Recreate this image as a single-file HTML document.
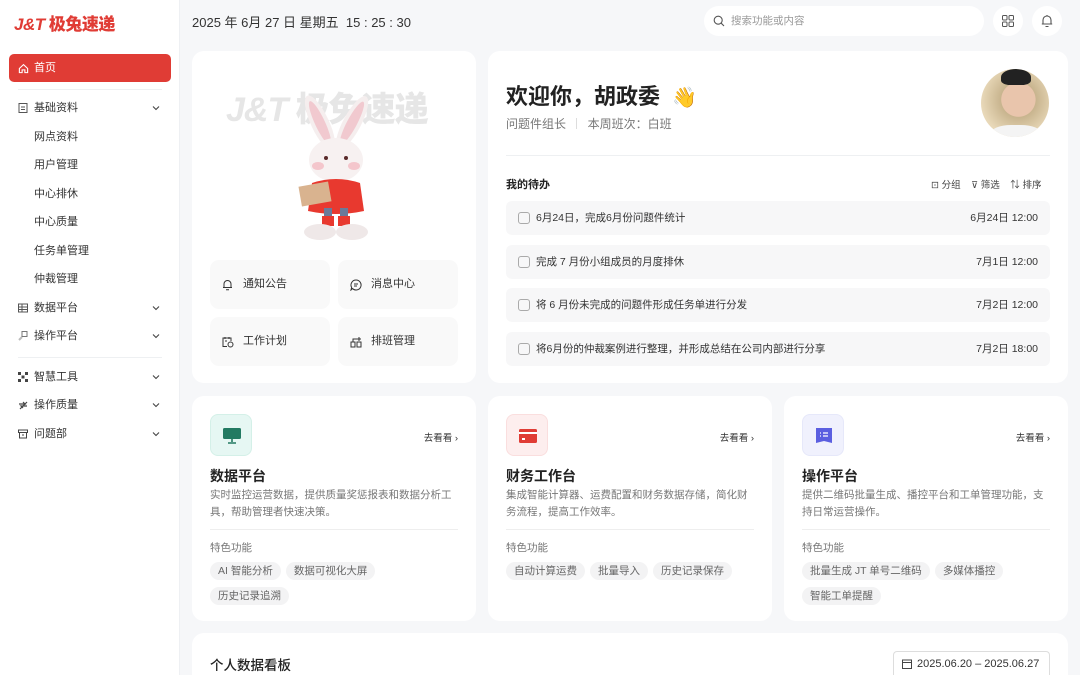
<!DOCTYPE html>
<html style="width:1080px;height:675px;overflow:hidden"><head><meta charset="utf-8">
<style>
*{margin:0;padding:0;box-sizing:border-box}
body{width:1080px;height:675px;overflow:hidden;background:#f6f7f9;font-family:"Liberation Sans","Noto Sans CJK SC",sans-serif;color:#222;position:relative}
.abs{position:absolute}
.side{left:0;top:0;width:180px;height:675px;background:#fff;border-right:1px solid #eef0f3}
.logo{left:14px;top:10px;font-size:17px;font-weight:900;font-style:italic;color:#e03c35;letter-spacing:-0.5px}
.active{left:9px;top:54px;width:162px;height:28px;background:#e03c35;border-radius:5px;color:#fff;font-size:11px;padding-left:25px;line-height:28px}
.it{left:34px;font-size:11px;color:#333;line-height:14px}
.ic{left:18px;width:10px;height:10px}
.chev{left:152px;width:8px;height:8px}
.hr{height:1px;background:#eef0f2}
.card{background:#fff;border-radius:12px}
.qb{background:#f9f9f9;border-radius:9px;width:120px;height:49px;font-size:11px;color:#333;line-height:49px;padding-left:33px}
.todo{left:506px;width:544px;height:34px;background:#f7f7f8;border-radius:6px;font-size:10.5px;color:#333;line-height:34px;padding-left:30px}
.todo i{position:absolute;left:12px;top:11px;width:12px;height:12px;border:1px solid #aaa;border-radius:3px}
.todo b{position:absolute;right:12px;font-weight:normal}
.pc h3{position:absolute;left:18px;top:70px;font-size:14px;font-weight:bold;color:#222}
.pc p{position:absolute;left:18px;top:91px;width:250px;font-size:10.5px;line-height:17px;color:#777}
.pc .ln{position:absolute;left:18px;right:18px;top:133px;height:1px;background:#eee}
.pc .ft{position:absolute;left:18px;top:144px;font-size:10.5px;color:#777}
.pc .tags{position:absolute;left:18px;top:165px;width:250px}
.tag{display:inline-block;background:#f3f3f4;border-radius:9px;font-size:10.5px;color:#666;padding:0 8px;height:18px;line-height:18px;margin:0 5px 6px 0}
.go{position:absolute;right:18px;top:34px;font-size:9.5px;color:#333}
.ib{position:absolute;left:18px;top:18px;width:42px;height:42px;border-radius:8px}
</style></head><body>
<div class="abs side"></div>
<div class="abs logo">J&amp;T <span style="font-style:normal">极兔速递</span></div>
<div class="abs active"><svg class="abs" style="left:9px;top:9px" width="11" height="11" viewBox="0 0 12 12" fill="none" stroke="#fff" stroke-width="1.2"><path d="M1.5 6L6 1.8 10.5 6V10.5H7.5V7.5h-3v3h-3z"/></svg>首页</div>
<div class="abs hr" style="left:18px;top:89px;width:144px"></div>
<div class="abs hr" style="left:18px;top:357px;width:144px"></div>
<svg class="abs ic" style="top:103px" viewBox="0 0 10 10" fill="none" stroke="#555"><rect x="1" y="0.5" width="8" height="9"/><path d="M3 4h4M3 6.5h4"/></svg>
<div class="abs it" style="top:101px">基础资料</div>
<div class="abs it" style="top:130px">网点资料</div>
<div class="abs it" style="top:158px">用户管理</div>
<div class="abs it" style="top:187px">中心排休</div>
<div class="abs it" style="top:215px">中心质量</div>
<div class="abs it" style="top:244px">任务单管理</div>
<div class="abs it" style="top:272px">仲裁管理</div>
<svg class="abs ic" style="top:303px" viewBox="0 0 10 10" fill="none" stroke="#555"><rect x="0.5" y="1" width="9" height="8"/><path d="M0.5 4h9M0.5 6.5h9M4 1v8"/></svg>
<div class="abs it" style="top:301px">数据平台</div>
<svg class="abs ic" style="top:331px" viewBox="0 0 10 10" fill="none" stroke="#777"><rect x="4" y="0.5" width="5" height="5"/><path d="M1 9L4 6" stroke="#bbb" stroke-width="2"/></svg>
<div class="abs it" style="top:329px">操作平台</div>
<svg class="abs ic" style="top:372px" viewBox="0 0 10 10" fill="#444"><rect x="0" y="0" width="3" height="3"/><rect x="7" y="0" width="3" height="3"/><rect x="0" y="7" width="3" height="3"/><rect x="7" y="7" width="3" height="3"/><rect x="3.5" y="3.5" width="3" height="3"/></svg>
<div class="abs it" style="top:370px">智慧工具</div>
<svg class="abs ic" style="top:400px" viewBox="0 0 10 10" fill="none" stroke="#444" stroke-width="1.2"><path d="M1 4h6l-2-2M9 6H3l2 2M2 9l7-7"/></svg>
<div class="abs it" style="top:398px">操作质量</div>
<svg class="abs ic" style="top:429px" viewBox="0 0 10 10" fill="none" stroke="#444"><rect x="0.5" y="1" width="9" height="2.5"/><path d="M1.5 3.5V9h7V3.5M4 6h2"/></svg>
<div class="abs it" style="top:427px">问题部</div>
<svg class="abs chev" style="top:104px" viewBox="0 0 8 8" fill="none" stroke="#444" stroke-width="1.1"><path d="M1 2.5l3 3 3-3"/></svg>
<svg class="abs chev" style="top:304px" viewBox="0 0 8 8" fill="none" stroke="#444" stroke-width="1.1"><path d="M1 2.5l3 3 3-3"/></svg>
<svg class="abs chev" style="top:332px" viewBox="0 0 8 8" fill="none" stroke="#444" stroke-width="1.1"><path d="M1 2.5l3 3 3-3"/></svg>
<svg class="abs chev" style="top:373px" viewBox="0 0 8 8" fill="none" stroke="#444" stroke-width="1.1"><path d="M1 2.5l3 3 3-3"/></svg>
<svg class="abs chev" style="top:401px" viewBox="0 0 8 8" fill="none" stroke="#444" stroke-width="1.1"><path d="M1 2.5l3 3 3-3"/></svg>
<svg class="abs chev" style="top:430px" viewBox="0 0 8 8" fill="none" stroke="#444" stroke-width="1.1"><path d="M1 2.5l3 3 3-3"/></svg>

<div class="abs" style="left:192px;top:12px;font-size:13px;color:#333">2025 年 6月 27 日 星期五 &nbsp;15 : 25 : 30</div>
<div class="abs" style="left:704px;top:6px;width:280px;height:30px;background:#fff;border-radius:15px;font-size:10.5px;color:#999;line-height:30px;padding-left:27px">
<svg class="abs" style="left:9px;top:9px" width="12" height="12" viewBox="0 0 12 12" fill="none" stroke="#555" stroke-width="1.1"><circle cx="5.2" cy="5.2" r="4"/><path d="M8.2 8.2L11 11"/></svg>搜索功能或内容</div>
<div class="abs" style="left:993px;top:6px;width:30px;height:30px;background:#fff;border-radius:15px"><svg class="abs" style="left:9px;top:9px" width="12" height="12" viewBox="0 0 12 12" fill="none" stroke="#555"><rect x="0.5" y="0.5" width="4.5" height="4.5" rx="1"/><rect x="7" y="0.5" width="4.5" height="4.5" rx="1"/><rect x="0.5" y="7" width="4.5" height="4.5" rx="1"/><rect x="7" y="7" width="4.5" height="4.5" rx="1"/></svg></div>
<div class="abs" style="left:1032px;top:6px;width:30px;height:30px;background:#fff;border-radius:15px"><svg class="abs" style="left:9px;top:8px" width="12" height="14" viewBox="0 0 12 14" fill="none" stroke="#555" stroke-width="1.1"><path d="M2 10V6a4 4 0 0 1 8 0v4h1.2H0.8H2M4.5 12.5h3M6 1v1"/></svg></div>

<div class="abs card" style="left:192px;top:51px;width:284px;height:332px"></div>
<div class="abs" style="left:226px;top:82px;font-size:34px;font-weight:900;font-style:italic;color:#e6e6e6;letter-spacing:-1px">J&amp;T <span style="font-style:normal">极兔速递</span></div>
<svg class="abs" style="left:290px;top:88px" width="90" height="152" viewBox="0 0 90 152">
<ellipse cx="30" cy="35" rx="9" ry="30" fill="#f5eeee" transform="rotate(-25 30 35)"/><ellipse cx="30" cy="35" rx="5" ry="24" fill="#f1c9cf" transform="rotate(-25 30 35)"/>
<ellipse cx="62" cy="35" rx="9" ry="30" fill="#f5eeee" transform="rotate(28 62 35)"/><ellipse cx="62" cy="35" rx="5" ry="24" fill="#f1c9cf" transform="rotate(28 62 35)"/>
<ellipse cx="46" cy="72" rx="27" ry="22" fill="#f7f1f1"/>
<ellipse cx="28" cy="78" rx="6" ry="4" fill="#f4c6cc"/><ellipse cx="64" cy="78" rx="6" ry="4" fill="#f4c6cc"/>
<circle cx="36" cy="70" r="2" fill="#5a2a2a"/><circle cx="56" cy="70" r="2" fill="#5a2a2a"/>
<path d="M22 95q24-8 48 0l4 28q-28 6-56 0z" fill="#e8392f"/>
<rect x="10" y="96" width="30" height="20" fill="#d9b38f" transform="rotate(-10 25 106)"/>
<rect x="34" y="120" width="8" height="10" fill="#6b7a99"/><rect x="50" y="120" width="8" height="10" fill="#6b7a99"/>
<path d="M32 128h12v10h-12zM48 128h12v10h-12z" fill="#e8392f"/>
<ellipse cx="30" cy="144" rx="16" ry="8" fill="#efe8e8"/><ellipse cx="62" cy="144" rx="16" ry="8" fill="#efe8e8"/>
</svg>
<div class="abs qb" style="left:210px;top:260px"><svg class="abs" style="left:12px;top:19px" width="11" height="12" viewBox="0 0 11 12" fill="none" stroke="#333"><path d="M2 8.5V5a3.5 3.5 0 0 1 7 0v3.5h1H1zM4 10.8h3"/></svg>通知公告</div>
<div class="abs qb" style="left:338px;top:260px"><svg class="abs" style="left:12px;top:19px" width="12" height="12" viewBox="0 0 12 12" fill="none" stroke="#333"><path d="M6 1a5 5 0 1 1-3.5 8.5L1 11l.6-2.6A5 5 0 0 1 6 1zM4 5h4M4 7h3"/></svg>消息中心</div>
<div class="abs qb" style="left:210px;top:317px"><svg class="abs" style="left:12px;top:19px" width="12" height="12" viewBox="0 0 12 12" fill="none" stroke="#333"><path d="M5 10.5H1V2h8v3M3 1v2M7 1v2M3 5h2"/><circle cx="8.5" cy="8.5" r="2.5"/></svg>工作计划</div>
<div class="abs qb" style="left:338px;top:317px"><svg class="abs" style="left:12px;top:19px" width="12" height="12" viewBox="0 0 12 12" fill="none" stroke="#333"><rect x="1" y="6" width="4" height="5"/><rect x="7" y="6" width="4" height="5"/><path d="M3 6V3h6M9 1v4M7 3h4"/></svg>排班管理</div>

<div class="abs card" style="left:488px;top:51px;width:580px;height:332px"></div>
<div class="abs" style="left:506px;top:79px;font-size:22px;font-weight:bold;color:#222">欢迎你，胡政委 <span style="font-size:20px;margin-left:6px;font-weight:normal">👋</span></div>
<div class="abs" style="left:506px;top:115px;font-size:12px;color:#777">问题件组长 <span style="display:inline-block;width:1px;height:11px;background:#ddd;margin:0 7px;vertical-align:-1px"></span> 本周班次：白班</div>
<div class="abs" style="left:981px;top:69px;width:68px;height:68px;border-radius:50%;background:radial-gradient(circle at 55% 45%,#e9c5ac 0 32%,#c8b48e 33%,#e8d8b8 70%);overflow:hidden"><div class="abs" style="left:20px;top:0;width:30px;height:16px;background:#222;border-radius:50% 50% 30% 30%"></div><div class="abs" style="left:10px;top:56px;width:50px;height:20px;background:#f4f4f4;border-radius:40%"></div></div>
<div class="abs hr" style="left:506px;top:155px;width:544px"></div>
<div class="abs" style="left:506px;top:176px;font-size:11px;font-weight:bold;color:#222">我的待办</div>
<div class="abs" style="left:931px;top:177px;font-size:9.5px;color:#444">⊡ 分组 &nbsp; &nbsp;⊽ 筛选 &nbsp; &nbsp;⇅ 排序</div>
<div class="abs todo" style="top:201px"><i></i>6月24日，完成6月份问题件统计<b>6月24日 12:00</b></div>
<div class="abs todo" style="top:245px"><i></i>完成 7 月份小组成员的月度排休<b>7月1日 12:00</b></div>
<div class="abs todo" style="top:288px"><i></i>将 6 月份未完成的问题件形成任务单进行分发<b>7月2日 12:00</b></div>
<div class="abs todo" style="top:332px"><i></i>将6月份的仲裁案例进行整理，并形成总结在公司内部进行分享<b>7月2日 18:00</b></div>

<div class="abs card pc" style="left:192px;top:396px;width:284px;height:225px">
<div class="ib" style="background:#e6f7f3;border:1px solid #d4f0e8"><svg class="abs" style="left:12px;top:13px" width="18" height="16" viewBox="0 0 18 16"><rect x="0" y="0" width="18" height="11" rx="1.5" fill="#237a62"/><path d="M9 11v3M5 15h8" stroke="#237a62" stroke-width="1.6"/></svg></div>
<div class="go">去看看 ›</div>
<h3>数据平台</h3>
<p>实时监控运营数据，提供质量奖惩报表和数据分析工具，帮助管理者快速决策。</p>
<div class="ln"></div><div class="ft">特色功能</div>
<div class="tags"><span class="tag">AI 智能分析</span><span class="tag">数据可视化大屏</span><span class="tag">历史记录追溯</span></div>
</div>
<div class="abs card pc" style="left:488px;top:396px;width:284px;height:225px">
<div class="ib" style="background:#fdeeee;border:1px solid #fadede"><svg class="abs" style="left:12px;top:13px" width="18" height="16" viewBox="0 0 18 16"><rect x="0" y="1" width="18" height="14" rx="1.5" fill="#e03c35"/><rect x="0" y="4" width="18" height="2" fill="#fff"/><rect x="3" y="10" width="3" height="2" fill="#fff"/></svg></div>
<div class="go">去看看 ›</div>
<h3>财务工作台</h3>
<p>集成智能计算器、运费配置和财务数据存储，简化财务流程，提高工作效率。</p>
<div class="ln"></div><div class="ft">特色功能</div>
<div class="tags"><span class="tag">自动计算运费</span><span class="tag">批量导入</span><span class="tag">历史记录保存</span></div>
</div>
<div class="abs card pc" style="left:784px;top:396px;width:284px;height:225px">
<div class="ib" style="background:#f0f1fd;border:1px solid #e6e8fa"><svg class="abs" style="left:13px;top:13px" width="16" height="16" viewBox="0 0 16 16"><path d="M0 0h16v15l-8-2-8 2z" fill="#5b5fe0"/><path d="M4 5h1M7 5h5M4 8h1M7 8h5" stroke="#fff" stroke-width="1.3"/></svg></div>
<div class="go">去看看 ›</div>
<h3>操作平台</h3>
<p>提供二维码批量生成、播控平台和工单管理功能，支持日常运营操作。</p>
<div class="ln"></div><div class="ft">特色功能</div>
<div class="tags"><span class="tag">批量生成 JT 单号二维码</span><span class="tag">多媒体播控</span><span class="tag">智能工单提醒</span></div>
</div>

<div class="abs card" style="left:192px;top:633px;width:876px;height:42px;border-radius:12px 12px 0 0"></div>
<div class="abs" style="left:210px;top:654px;font-size:13.5px;font-weight:500;color:#222">个人数据看板</div>
<div class="abs" style="left:893px;top:651px;width:157px;height:24px;border:1px solid #ddd;border-bottom:none;border-radius:4px 4px 0 0;font-size:11px;color:#333;line-height:24px;padding-left:23px;background:#fff"><svg class="abs" style="left:8px;top:7px" width="10" height="10" viewBox="0 0 10 10" fill="none" stroke="#444"><rect x="0.5" y="1" width="9" height="8.5"/><path d="M0.5 3.5h9"/></svg>2025.06.20 – 2025.06.27</div>
</body></html>
